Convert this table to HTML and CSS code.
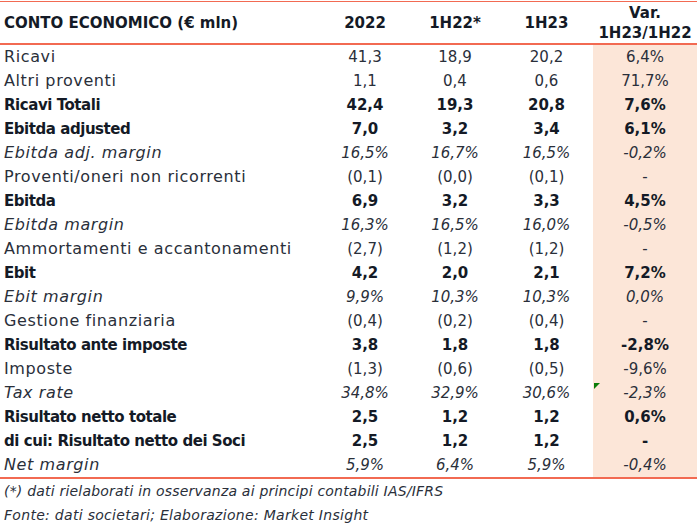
FILE: index.html
```html
<!DOCTYPE html>
<html lang="it">
<head>
<meta charset="utf-8">
<link rel="stylesheet" href="styles.css">
</head>
<body>
<table class="ce">
  <colgroup>
    <col class="c-label"><col class="c-num"><col class="c-num"><col class="c-num2"><col class="c-var">
  </colgroup>
  <thead>
    <tr>
      <th class="lab">CONTO ECONOMICO (€ mln)</th>
      <th>2022</th>
      <th>1H22*</th>
      <th>1H23</th>
      <th class="var-h">Var.<br>1H23/1H22</th>
    </tr>
  </thead>
  <tbody>
    <tr><td class="lab">Ricavi</td><td>41,3</td><td>18,9</td><td>20,2</td><td class="var">6,4%</td></tr>
    <tr><td class="lab">Altri proventi</td><td>1,1</td><td>0,4</td><td>0,6</td><td class="var">71,7%</td></tr>
    <tr class="b"><td class="lab">Ricavi Totali</td><td>42,4</td><td>19,3</td><td>20,8</td><td class="var">7,6%</td></tr>
    <tr class="b"><td class="lab">Ebitda adjusted</td><td>7,0</td><td>3,2</td><td>3,4</td><td class="var">6,1%</td></tr>
    <tr class="i"><td class="lab">Ebitda adj. margin</td><td>16,5%</td><td>16,7%</td><td>16,5%</td><td class="var">-0,2%</td></tr>
    <tr><td class="lab">Proventi/oneri non ricorrenti</td><td>(0,1)</td><td>(0,0)</td><td>(0,1)</td><td class="var">-</td></tr>
    <tr class="b"><td class="lab">Ebitda</td><td>6,9</td><td>3,2</td><td>3,3</td><td class="var">4,5%</td></tr>
    <tr class="i"><td class="lab">Ebitda margin</td><td>16,3%</td><td>16,5%</td><td>16,0%</td><td class="var">-0,5%</td></tr>
    <tr><td class="lab">Ammortamenti e accantonamenti</td><td>(2,7)</td><td>(1,2)</td><td>(1,2)</td><td class="var">-</td></tr>
    <tr class="b"><td class="lab">Ebit</td><td>4,2</td><td>2,0</td><td>2,1</td><td class="var">7,2%</td></tr>
    <tr class="i"><td class="lab">Ebit margin</td><td>9,9%</td><td>10,3%</td><td>10,3%</td><td class="var">0,0%</td></tr>
    <tr><td class="lab">Gestione finanziaria</td><td>(0,4)</td><td>(0,2)</td><td>(0,4)</td><td class="var">-</td></tr>
    <tr class="b"><td class="lab">Risultato ante imposte</td><td>3,8</td><td>1,8</td><td>1,8</td><td class="var">-2,8%</td></tr>
    <tr><td class="lab">Imposte</td><td>(1,3)</td><td>(0,6)</td><td>(0,5)</td><td class="var">-9,6%</td></tr>
    <tr class="i"><td class="lab">Tax rate</td><td>34,8%</td><td>32,9%</td><td>30,6%</td><td class="var flag">-2,3%</td></tr>
    <tr class="b"><td class="lab">Risultato netto totale</td><td>2,5</td><td>1,2</td><td>1,2</td><td class="var">0,6%</td></tr>
    <tr class="b"><td class="lab">di cui: Risultato netto dei Soci</td><td>2,5</td><td>1,2</td><td>1,2</td><td class="var">-</td></tr>
    <tr class="i last"><td class="lab">Net margin</td><td>5,9%</td><td>6,4%</td><td>5,9%</td><td class="var">-0,4%</td></tr>
  </tbody>
</table>
<p class="note n1">(*) dati rielaborati in osservanza ai principi contabili IAS/IFRS</p>
<p class="note n2">Fonte: dati societari; Elaborazione: Market Insight</p>
</body>
</html>
```

FILE: styles.css
```css
html, body {
  margin: 0;
  padding: 0;
  background: #ffffff;
}
body {
  font-family: "DejaVu Sans", sans-serif;
  color: #1d2433;
}
.ce {
  border-collapse: collapse;
  width: 697px;
  margin-top: 1px;
  border-top: 1px solid #f26a52;
  table-layout: fixed;
}
.c-label { width: 320px; }
.c-num { width: 90px; }
.c-num2 { width: 93px; }
.c-var { width: 104px; }
th {
  height: 41px;
  font-size: 15px;
  font-weight: bold;
  text-align: center;
  padding: 0;
  line-height: 20px;
  border-bottom: 2px solid #f26a52;
  color: #141a26;
}
th.lab {
  text-align: left;
  padding-left: 4px;
}
td {
  height: 24px;
  padding: 0;
  font-size: 15px;
  text-align: center;
  color: #2a2f3a;
  line-height: 24px;
}
td.lab {
  text-align: left;
  padding-left: 4px;
  font-size: 16px;
  letter-spacing: 0.6px;
}
td.var {
  background: #fce6d8;
  position: relative;
}
tr.b td {
  font-weight: bold;
  color: #141a26;
}
tr.b td.lab {
  font-size: 15px;
  letter-spacing: -0.45px;
}
tr.i td {
  font-style: italic;
}
tr.last td {
  border-bottom: 2px solid #f26a52;
}
td.flag::before {
  content: "";
  position: absolute;
  left: 1px;
  top: 2px;
  border-top: 6px solid #0a7d0a;
  border-right: 6px solid transparent;
}
.note {
  margin: 0;
  padding-left: 4px;
  font-size: 14px;
  font-style: italic;
  line-height: 24px;
  color: #2a2f3a;
}
.n1 { letter-spacing: 0.2px; }
.n2 { letter-spacing: 0.3px; }
```
